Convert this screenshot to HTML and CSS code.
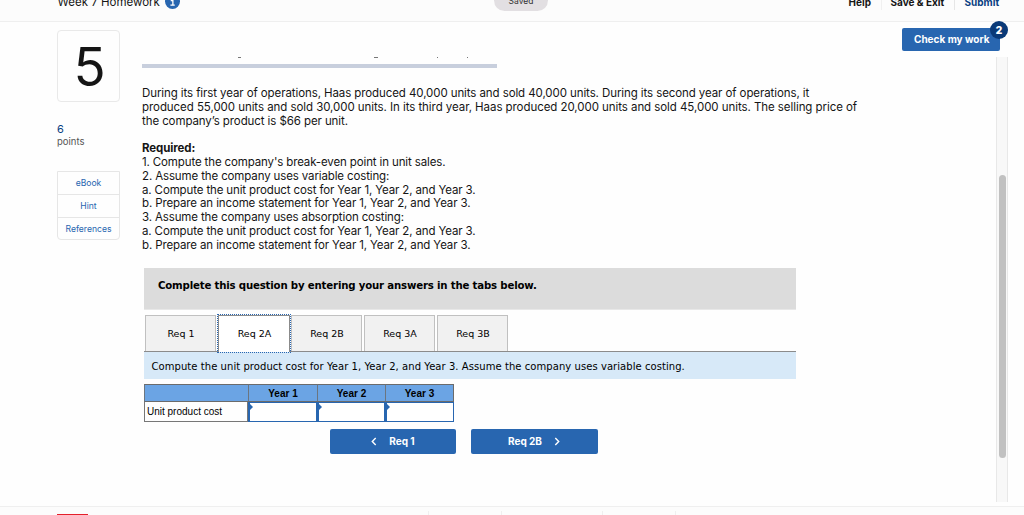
FILE: index.html
```html
<!DOCTYPE html>
<html lang="en">
<head>
<meta charset="utf-8">
<title>Week 7 Homework</title>
<link rel="stylesheet" href="styles.css">
</head>
<body>
<header class="topbar">
  <div class="title">Week 7 Homework</div>
  <svg class="info" width="15" height="15" viewBox="0 0 16 16"><circle cx="8" cy="8" r="8" fill="#2866b0"/><path d="M6.1 7h2.3v4.6M5.8 11.8h4.6" fill="none" stroke="#fff" stroke-width="1.4"/><circle cx="8" cy="4.4" r="1" fill="#fff"/></svg>
  <div class="saved"><span>Saved</span></div>
  <nav class="actions"><a class="help">Help</a><a class="exit">Save &amp; Exit</a><a class="submit">Submit</a></nav>
</header>
<main class="main">
  <aside class="side">
    <div class="number">5</div>
    <div class="score">6</div>
    <div class="points">points</div>
    <div class="links"><a>eBook</a><a>Hint</a><a>References</a></div>
  </aside>
  <section class="content">
    <div class="clipped">
      <i class="m1"></i><i class="m2"></i><i class="m3"></i><i class="m4"></i>
    </div>
    <div class="prose">
      <p>During its first year of operations, Haas produced 40,000 units and sold 40,000 units. During its second year of operations, it</p>
      <p class="wide">produced 55,000 units and sold 30,000 units. In its third year, Haas produced 20,000 units and sold 45,000 units. The selling price of</p>
      <p>the company’s product is $66 per unit.</p>
      <p class="req">Required:</p>
      <div class="steps">
        <p>1. Compute the company's break-even point in unit sales.</p>
        <p>2. Assume the company uses variable costing:</p>
        <p>a. Compute the unit product cost for Year 1, Year 2, and Year 3.</p>
        <p>b. Prepare an income statement for Year 1, Year 2, and Year 3.</p>
        <p>3. Assume the company uses absorption costing:</p>
        <p>a. Compute the unit product cost for Year 1, Year 2, and Year 3.</p>
        <p>b. Prepare an income statement for Year 1, Year 2, and Year 3.</p>
      </div>
    </div>
    <div class="panel">
      <div class="instruct">Complete this question by entering your answers in the tabs below.</div>
      <div class="tabs"><a>Req 1</a><a class="active">Req 2A</a><a>Req 2B</a><a>Req 3A</a><a>Req 3B</a></div>
      <div class="prompt">Compute the unit product cost for Year 1, Year 2, and Year 3. Assume the company uses variable costing.</div>
    </div>
    <div class="sheet">
      <div class="th"></div><div class="th">Year 1</div><div class="th">Year 2</div><div class="th">Year 3</div>
      <div class="td">Unit product cost</div><div class="cell"></div><div class="cell"></div><div class="cell"></div>
    </div>
    <div class="pager">
      <a class="btn"><svg width="6" height="9" viewBox="0 0 6 9"><path d="M4.7 1L1.3 4.5L4.7 8"/></svg><span>Req 1</span></a>
      <a class="btn next"><span>Req 2B</span><svg width="6" height="9" viewBox="0 0 6 9"><path d="M1.3 1L4.7 4.5L1.3 8"/></svg></a>
    </div>
  </section>
  <div class="check">Check my work<b class="badge">2</b></div>
  <div class="track"><div class="thumb"></div></div>
</main>
<footer class="bottom"><i class="red"></i><i class="tick t1"></i><i class="tick t2"></i><i class="tick t3"></i><i class="tick t4"></i></footer>
</body>
</html>
```
FILE: styles.css
```css
* { box-sizing: border-box; }
body { margin: 0; width: 1024px; height: 515px; overflow: hidden; display: flex; flex-direction: column; background: #fefefe; color: #151515; font-family: Inter, "Liberation Sans", sans-serif; font-size: 12px; }
p { margin: 0; }
i { display: block; }

.topbar { height: 22px; flex: none; display: flex; align-items: flex-start; background: #fcfcfc; border-bottom: 1px solid #efefef; overflow: hidden; padding-left: 57.5px; }
.title { width: 107.5px; margin-top: -6px; line-height: 16px; font-size: 11.5px; white-space: nowrap; }
.info { margin-top: -6px; flex: none; }
.saved { margin-top: -10px; margin-left: 314px; width: 54px; height: 21px; border-radius: 11px; background: #e2dfe2; color: #333; font-size: 8.5px; line-height: 22px; text-align: center; }
.actions { display: flex; margin-left: 300.5px; margin-top: -7px; font-size: 10px; font-weight: 700; line-height: 19px; white-space: nowrap; }
.help { width: 33px; height: 17px; border-right: 1px solid #f0f0f0; }
.exit { width: 73px; height: 17px; padding-left: 9px; border-right: 1px solid #e6e6e6; }
.submit { padding-left: 10px; color: #0a3f82; }

.main { flex: 1; position: relative; display: flex; padding-left: 57px; }
.side { width: 85px; padding-top: 8px; }
.number { width: 63px; height: 72px; border: 1px solid #e9e9e9; border-radius: 4px; font-size: 53px; line-height: 73px; text-align: center; padding-left: 2px; }
.score { margin-top: 20px; line-height: 14px; color: #0a3f82; font-size: 11px; }
.points { line-height: 11px; font-size: 9.5px; color: #555; }
.links { margin-top: 24px; width: 63px; border: 1px solid #e6e6e6; border-radius: 0 0 4px 4px; color: #2866b0; font-size: 8.6px; text-align: center; }
.links a { display: block; height: 23px; line-height: 22px; border-bottom: 1px solid #e6e6e6; }
.links a:last-child { border-bottom: 0; height: 21px; }

.content { width: 720px; }
.clipped { width: 355px; height: 46px; border-bottom: 4px solid #c8cfdd; position: relative; }
.clipped i { position: absolute; top: 35px; height: 1px; background: #777; }
.m1 { left: 96px; width: 3px; }
.m2 { left: 232px; width: 4px; }
.m3 { left: 295px; width: 1px; }
.m4 { left: 325px; width: 1px; }
.prose { margin-top: 19px; font-size: 11.5px; line-height: 13.8px; letter-spacing: -0.092px; white-space: nowrap; }
.wide { letter-spacing: -0.062px; }
.req { margin-top: 13.8px; font-weight: 700; letter-spacing: -0.1px; }
.steps { letter-spacing: -0.13px; }

.panel { margin: 15.4px 0 0 2px; width: 652px; font-family: "DejaVu Sans", sans-serif; color: #000; }
.instruct { height: 42px; background: #dcdcdc; border-bottom: 1px solid #e8e8e8; padding: 10px 14px; line-height: 16px; font-size: 10.2px; letter-spacing: -0.18px; font-weight: 700; white-space: nowrap; }
.tabs { display: flex; gap: 2px; margin-top: 5px; padding-left: 1px; height: 37px; border-bottom: 1px solid #8b8b8b; font-size: 9.5px; }
.tabs a { width: 71px; height: 36px; background: #f1f1f1; border: 1px solid #c0c0c0; border-bottom: 0; line-height: 36px; padding-left: 1px; text-align: center; }
.tabs .active { width: 72px; margin-right: -1px; height: 37px; background: #fff; border-color: #8b8b8b; outline: 1px dotted #2866b0; position: relative; }
.prompt { height: 27px; background: #d7e9f8; padding-left: 7.5px; line-height: 29px; font-size: 10px; letter-spacing: 0.06px; white-space: nowrap; }

.sheet { margin: 5px 0 0 2px; width: 310px; display: grid; grid-template-columns: 104px 69px 68px 69px; grid-template-rows: 18px 20px; font-family: "Liberation Sans", sans-serif; font-size: 10px; color: #000; }
.th { background: #6ba4e4; border-top: 1px solid #6b6b6b; border-left: 1px solid #6b7580; border-bottom: 1px solid #6b6b6b; font-weight: 700; text-align: center; line-height: 17px; }
.th:nth-child(4) { border-right: 1px solid #6b6b6b; }
.td { border: 1px solid #777; border-top: 0; line-height: 19px; padding-left: 2px; white-space: nowrap; }
.cell { border: 1px solid #2866b0; border-left-width: 2px; background: #fff; }
.cell::before { content: ""; display: block; width: 3px; height: 6px; margin-top: 1px; background: #2866b0; clip-path: polygon(0 0, 100% 50%, 0 100%); }
.pager { display: flex; gap: 15px; margin: 7px 0 0 188px; }
.btn { width: 126px; height: 25px; border-radius: 2px; background: #2866b0; color: #fff; font-size: 10px; font-weight: 700; display: flex; align-items: center; justify-content: center; gap: 12px; }
.next { width: 127px; padding-right: 1px; }
.btn path { fill: none; stroke: #fff; stroke-width: 1.4; }

.check { position: relative; width: 98px; height: 23px; margin: 6px 0 0 40px; border-radius: 2px; background: #2866b0; color: #fff; font-size: 10px; font-weight: 700; line-height: 23px; padding-left: 12px; white-space: nowrap; }
.badge { position: absolute; left: 88px; top: -7px; width: 18px; height: 18px; border-radius: 50%; background: #0a3a78; text-align: center; line-height: 18px; }
.track { width: 12px; height: 445px; margin: 35px 0 0 -4px; background: #f8f8f8; border: solid #e8e8e8; border-width: 0 1px; padding-top: 118px; }
.thumb { width: 7px; height: 283px; margin-left: 2px; border-radius: 4px; background: #c1c1c1; }

.bottom { height: 9px; flex: none; background: #fcfcfc; border-top: 1px solid #efefef; position: relative; }
.bottom i { position: absolute; }
.red { left: 57px; top: 7px; width: 31px; height: 1px; background: #e4202a; }
.tick { top: 4px; width: 1px; height: 5px; background: #efefef; }
.t1 { left: 428px; } .t2 { left: 501px; } .t3 { left: 602px; } .t4 { left: 675px; }
```
